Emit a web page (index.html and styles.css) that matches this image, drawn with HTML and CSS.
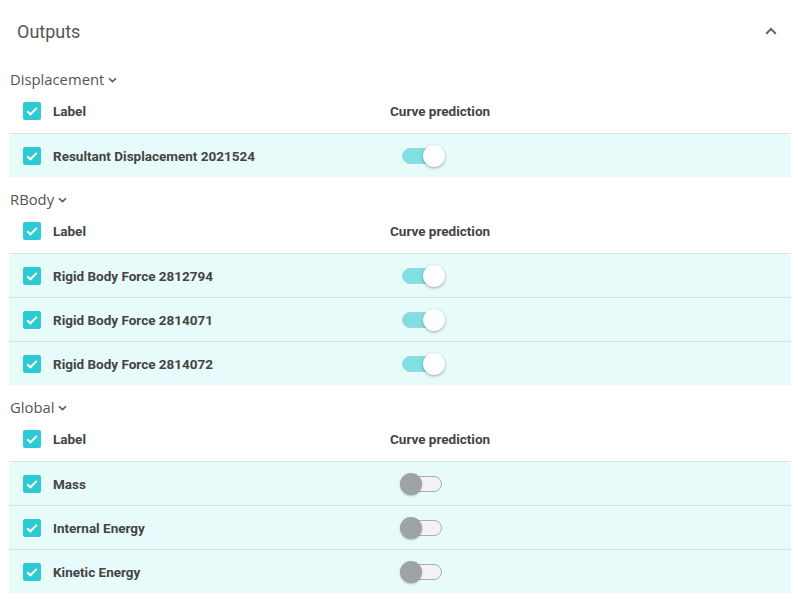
FILE: index.html
```html
<!DOCTYPE html>
<html>
<head>
<meta charset="utf-8">
<link rel="stylesheet" href="styles.css">
</head>
<body>
<div class="panel">
  <div class="panel-head">
    <span class="panel-title">Outputs</span>
    <svg class="collapse" width="12" height="8" viewBox="0 0 12 8"><path d="M1.2 6.8 L6 2 L10.8 6.8" fill="none" stroke="#666" stroke-width="2"/></svg>
  </div>

  <div class="section">
    <div class="section-title">Displacement <svg class="caret" width="9" height="6" viewBox="0 0 9 6"><path d="M1 1.2 L4.5 4.6 L8 1.2" fill="none" stroke="#555" stroke-width="1.5"/></svg></div>
    <div class="row head">
      <span class="check"><svg width="18" height="18" viewBox="0 0 18 18"><path d="M4.2 9.2 L7.4 12.3 L13.8 5.9" fill="none" stroke="#fff" stroke-width="2"/></svg></span>
      <span class="label">Label</span>
      <span class="col">Curve prediction</span>
    </div>
    <div class="row item">
      <span class="check"><svg width="18" height="18" viewBox="0 0 18 18"><path d="M4.2 9.2 L7.4 12.3 L13.8 5.9" fill="none" stroke="#fff" stroke-width="2"/></svg></span>
      <span class="label">Resultant Displacement 2021524</span>
      <span class="switch on"><span class="track"></span><span class="thumb"></span></span>
    </div>
  </div>

  <div class="section">
    <div class="section-title">RBody <svg class="caret" width="9" height="6" viewBox="0 0 9 6"><path d="M1 1.2 L4.5 4.6 L8 1.2" fill="none" stroke="#555" stroke-width="1.5"/></svg></div>
    <div class="row head">
      <span class="check"><svg width="18" height="18" viewBox="0 0 18 18"><path d="M4.2 9.2 L7.4 12.3 L13.8 5.9" fill="none" stroke="#fff" stroke-width="2"/></svg></span>
      <span class="label">Label</span>
      <span class="col">Curve prediction</span>
    </div>
    <div class="row item">
      <span class="check"><svg width="18" height="18" viewBox="0 0 18 18"><path d="M4.2 9.2 L7.4 12.3 L13.8 5.9" fill="none" stroke="#fff" stroke-width="2"/></svg></span>
      <span class="label">Rigid Body Force 2812794</span>
      <span class="switch on"><span class="track"></span><span class="thumb"></span></span>
    </div>
    <div class="row item">
      <span class="check"><svg width="18" height="18" viewBox="0 0 18 18"><path d="M4.2 9.2 L7.4 12.3 L13.8 5.9" fill="none" stroke="#fff" stroke-width="2"/></svg></span>
      <span class="label">Rigid Body Force 2814071</span>
      <span class="switch on"><span class="track"></span><span class="thumb"></span></span>
    </div>
    <div class="row item">
      <span class="check"><svg width="18" height="18" viewBox="0 0 18 18"><path d="M4.2 9.2 L7.4 12.3 L13.8 5.9" fill="none" stroke="#fff" stroke-width="2"/></svg></span>
      <span class="label">Rigid Body Force 2814072</span>
      <span class="switch on"><span class="track"></span><span class="thumb"></span></span>
    </div>
  </div>

  <div class="section">
    <div class="section-title">Global <svg class="caret" width="9" height="6" viewBox="0 0 9 6"><path d="M1 1.2 L4.5 4.6 L8 1.2" fill="none" stroke="#555" stroke-width="1.5"/></svg></div>
    <div class="row head">
      <span class="check"><svg width="18" height="18" viewBox="0 0 18 18"><path d="M4.2 9.2 L7.4 12.3 L13.8 5.9" fill="none" stroke="#fff" stroke-width="2"/></svg></span>
      <span class="label">Label</span>
      <span class="col">Curve prediction</span>
    </div>
    <div class="row item">
      <span class="check"><svg width="18" height="18" viewBox="0 0 18 18"><path d="M4.2 9.2 L7.4 12.3 L13.8 5.9" fill="none" stroke="#fff" stroke-width="2"/></svg></span>
      <span class="label">Mass</span>
      <span class="switch"><span class="track"></span><span class="thumb"></span></span>
    </div>
    <div class="row item">
      <span class="check"><svg width="18" height="18" viewBox="0 0 18 18"><path d="M4.2 9.2 L7.4 12.3 L13.8 5.9" fill="none" stroke="#fff" stroke-width="2"/></svg></span>
      <span class="label">Internal Energy</span>
      <span class="switch"><span class="track"></span><span class="thumb"></span></span>
    </div>
    <div class="row item">
      <span class="check"><svg width="18" height="18" viewBox="0 0 18 18"><path d="M4.2 9.2 L7.4 12.3 L13.8 5.9" fill="none" stroke="#fff" stroke-width="2"/></svg></span>
      <span class="label">Kinetic Energy</span>
      <span class="switch"><span class="track"></span><span class="thumb"></span></span>
    </div>
  </div>
</div>
</body>
</html>
```

FILE: styles.css
```css
* { box-sizing: border-box; }
html, body { margin: 0; padding: 0; background: #fff; }
body { font-family: Roboto, "Liberation Sans", sans-serif; color: #444; }

.panel {
  width: 798px;
  padding: 0 7px 0 9px;
}

.panel-head {
  height: 57px;
  display: flex;
  align-items: center;
  justify-content: space-between;
  padding: 6px 14px 0 8px;
}
.panel-title {
  font-family: Roboto, sans-serif;
  font-size: 18px;
  color: #555;
}
.collapse { display: block; margin-top: -2px; }

.section-title {
  margin-top: 12px;
  height: 20px;
  line-height: 20px;
  font-family: "Open Sans", "Noto Sans", sans-serif;
  font-size: 14.8px;
  color: #555;
  display: flex;
  align-items: center;
  padding-left: 1px;
}
.caret { margin-left: 4px; margin-top: 1px; }

.row {
  display: flex;
  align-items: center;
  padding-left: 14px;
}
.row.head { height: 44px; padding-bottom: 1px; }
.row.item {
  height: 44px;
  border-top: 1px solid #dedede;
  background: #e8fbfb;
}

.check {
  width: 18px;
  height: 18px;
  border-radius: 2px;
  background: #2ccbd4;
  display: flex;
  flex: none;
}
.label {
  width: 337px;
  margin-left: 12px;
  font-weight: 700;
  font-size: 13.5px;
  color: #444;
}
.col {
  font-weight: 700;
  font-size: 13.5px;
  color: #444;
}

.switch {
  position: relative;
  width: 56px;
  height: 24px;
  flex: none;
}
.track {
  position: absolute;
  left: 12px;
  top: 4px;
  width: 40px;
  height: 16px;
  border-radius: 8px;
  background: #f3f3f3;
  border: 1px solid #a9aeb0;
}
.thumb {
  position: absolute;
  left: 10px;
  top: 1px;
  width: 22px;
  height: 22px;
  border-radius: 50%;
  background: #9ea3a5;
  box-shadow: 0 1px 2px rgba(0,0,0,0.25);
}
.switch.on .track {
  background: #80dfe2;
  border-color: #9fd8da;
}
.switch.on .thumb {
  left: 33px;
  background: #fff;
  box-shadow: 0 1px 3px rgba(0,0,0,0.35);
}
```
